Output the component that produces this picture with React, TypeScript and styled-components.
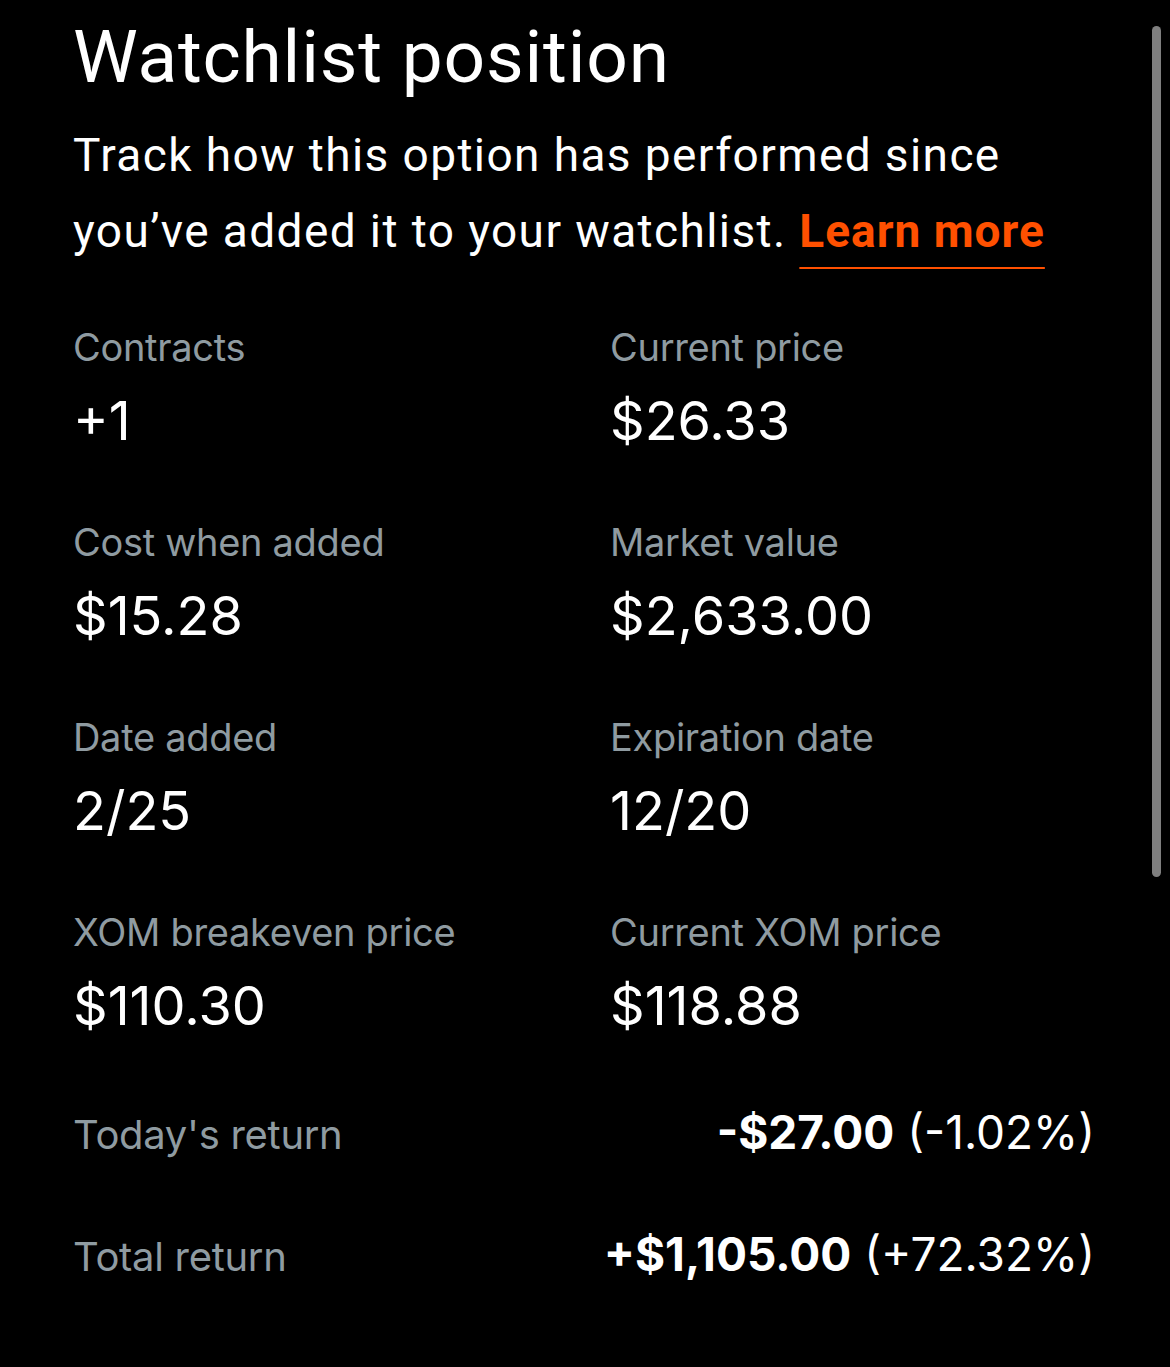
import styled, { createGlobalStyle } from 'styled-components'

const GlobalStyle = createGlobalStyle`
  html, body {
    margin: 0;
    padding: 0;
    background: #000;
  }
  #root {
    min-height: 100vh;
  }
`

const Page = styled.div`
  position: relative;
  min-height: 1367px;
  background: #000;
  color: #fff;
  padding: 21px 73px 0 73px;
  box-sizing: border-box;
`

const ScrollThumb = styled.div`
  position: absolute;
  top: 26px;
  right: 9px;
  width: 9px;
  height: 851px;
  border-radius: 5px;
  background: #7f7f7f;
`

const Title = styled.h1`
  margin: 0;
  font-family: Roboto, 'Liberation Sans', sans-serif;
  font-weight: 400;
  font-size: 73px;
  line-height: 73px;
  letter-spacing: 0.8px;
`

const Intro = styled.p`
  margin: 23px 0 0;
  font-family: Roboto, 'Liberation Sans', sans-serif;
  font-size: 46px;
  line-height: 76px;
  letter-spacing: 1.4px;
  width: 1010px;
`

const LearnMore = styled.a`
  color: #ff5000;
  font-weight: 700;
  letter-spacing: 1px;
  text-decoration: underline;
  text-decoration-thickness: 2px;
  text-underline-offset: 20px;
  cursor: pointer;
`

const StatsGrid = styled.div`
  display: grid;
  grid-template-columns: 1fr 1fr;
  column-gap: 52px;
  row-gap: 65px;
  margin-top: 54px;
  width: 1022px;
`

const Stat = styled.div`
  display: flex;
  flex-direction: column;
`

const Label = styled.span<{ $size?: number }>`
  font-family: Inter, 'Liberation Sans', sans-serif;
  font-size: ${(p) => p.$size ?? 38}px;
  line-height: 48px;
  letter-spacing: -0.3px;
  color: #8f9ba1;
`

const Value = styled.span`
  margin-top: 18px;
  font-family: Inter, 'Liberation Sans', sans-serif;
  font-size: 54px;
  line-height: 64px;
  color: #fff;
`

const ReturnRow = styled.div`
  display: flex;
  justify-content: space-between;
  align-items: baseline;
  width: 1022px;
  margin-top: 66px;
  line-height: 56px;
`

const ReturnAmount = styled.span`
  font-family: Inter, 'Liberation Sans', sans-serif;
  font-size: 46px;
  color: #fff;

  b {
    font-weight: 700;
  }
`

const stats = [
  ['Contracts', '+1'],
  ['Current price', '$26.33'],
  ['Cost when added', '$15.28'],
  ['Market value', '$2,633.00'],
  ['Date added', '2/25'],
  ['Expiration date', '12/20'],
  ['XOM breakeven price', '$110.30'],
  ['Current XOM price', '$118.88'],
]

const returns = [
  { label: "Today's return", amount: '-$27.00', pct: '(-1.02%)' },
  { label: 'Total return', amount: '+$1,105.00', pct: '(+72.32%)' },
]

export default function App() {
  return (
    <>
      <GlobalStyle />
      <Page>
        <Title>Watchlist position</Title>
        <Intro>
          Track how this option has performed since you’ve added it to your
          watchlist. <LearnMore>Learn more</LearnMore>
        </Intro>
        <StatsGrid>
          {stats.map(([label, value]) => (
            <Stat key={label}>
              <Label>{label}</Label>
              <Value>{value}</Value>
            </Stat>
          ))}
        </StatsGrid>
        {returns.map((r) => (
          <ReturnRow key={r.label}>
            <Label $size={40}>{r.label}</Label>
            <ReturnAmount>
              <b>{r.amount}</b> {r.pct}
            </ReturnAmount>
          </ReturnRow>
        ))}
        <ScrollThumb />
      </Page>
    </>
  )
}
